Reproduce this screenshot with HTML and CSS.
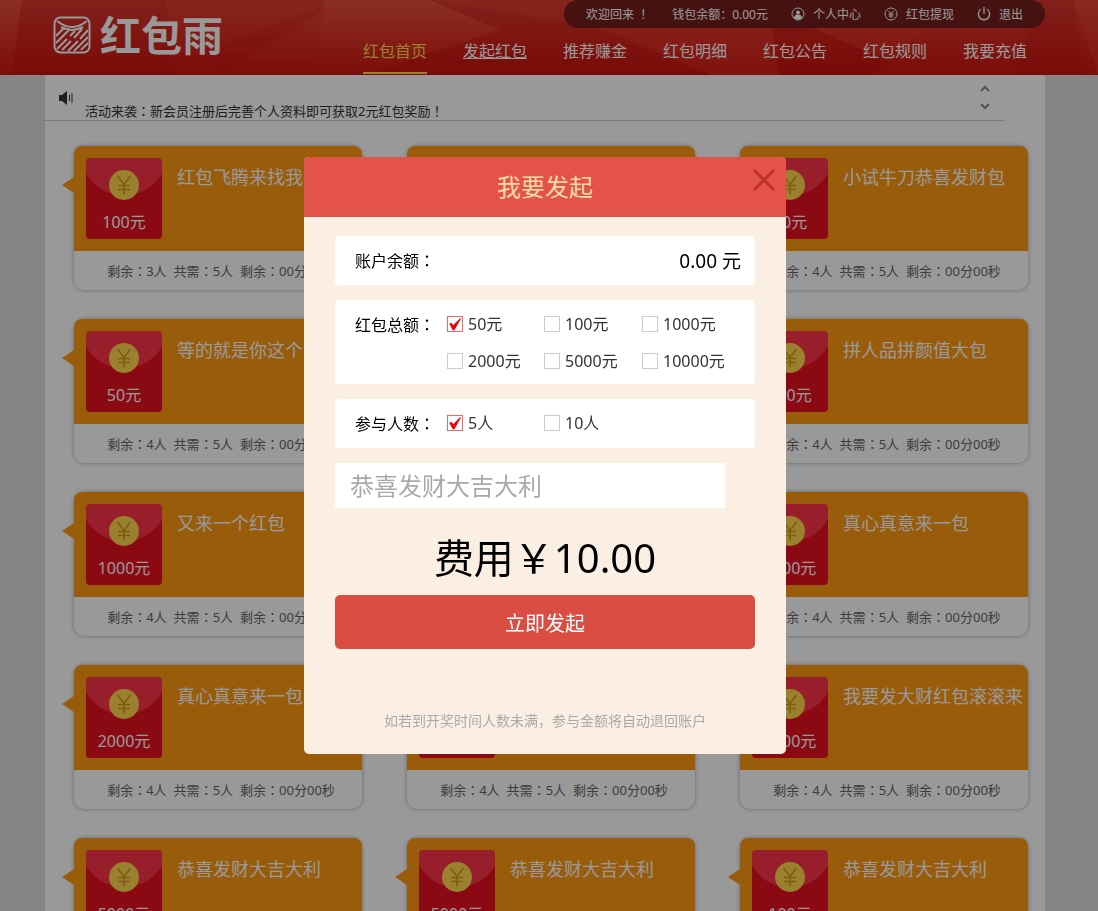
FILE: index.html
```html
<!DOCTYPE html>
<html lang="zh-CN">
<head>
<meta charset="utf-8">
<meta name="viewport" content="width=device-width, initial-scale=1">
<title>红包雨</title>
<link rel="stylesheet" href="styles.css">
</head>
<body>
<svg class="defs" aria-hidden="true">
  <symbol id="coin" viewBox="0 0 30 30">
    <circle cx="15" cy="15" r="15" fill="#ffd84f"/>
    <path d="M8.500 6 15 14.500 21.500 6M15 14.500V24.500M9 15.500H21M9 19.500H21" fill="none" stroke="#d09a22" stroke-width="1.600"/>
  </symbol>
</svg>

<header class="header">
  <svg class="header-art" viewBox="0 0 1098 75" preserveAspectRatio="none" aria-hidden="true">
    <defs>
      <linearGradient id="base" x1="0" y1="0" x2="0" y2="1">
        <stop offset="0" stop-color="#df3f33"/>
        <stop offset="1" stop-color="#d01410"/>
      </linearGradient>
      <linearGradient id="light" x1="0" y1="0" x2="0" y2="1">
        <stop offset="0" stop-color="#ff7a5c" stop-opacity=".25"/>
        <stop offset="1" stop-color="#ff5a3c" stop-opacity=".02"/>
      </linearGradient>
    </defs>
    <rect width="1098" height="75" fill="url(#base)"/>
    <path d="M0 0H22L12 75H0Z" fill="url(#light)"/>
    <path d="M22 0H166L176 75H12Z" fill="#b80808" opacity=".15"/>
    <path d="M325 0 318 15 215 75H365L500 30 430 0Z" fill="url(#light)"/>
    <path d="M325 6 205 50 225 75H312Z" fill="#b80808" opacity=".1"/>
    <path d="M430 0 500 30 365 75H710L600 28Z" fill="#b80808" opacity=".15"/>
    <path d="M598 28H775L780 75H712Z" fill="#ff5a35" opacity=".15"/>
    <path d="M772 28H812L890 62 875 75H778Z" fill="#c00606" opacity=".3"/>
    <path d="M812 28H925L888 60Z" fill="#ff5a35" opacity=".12"/>
    <path d="M1040 0H1074L1084 75H1015Z" fill="#b80808" opacity=".15"/>
    <path d="M1074 0H1098V75Z" fill="#ff6a45" opacity=".15"/>
  </svg>
  <div class="wrap header-inner">
    <a class="logo" href="#">
      <svg width="38" height="38" viewBox="0 0 38 38" fill="none" stroke="currentColor" stroke-width="2" aria-hidden="true">
        <rect x="1.500" y="1.500" width="35" height="35" rx="6"/>
        <path d="M4 5Q19 17 34 5M8 11Q19 17 30 11M3 20 11 12M3 27 16 14M4 33 14 23M17 20 22 15M9 34 18 25M21 22 29 13M15 35 25 25M27 23 35 14M21 35 35 21M28 34 35 27"/>
      </svg>
      <span>红包雨</span>
    </a>
    <div class="header-side">
      <div class="account">
        <span class="welcome">欢迎回来 <i class="mark" lang="zh-Hant">！</i></span>
        <span class="balance">钱包余额：0.00元</span>
        <a href="#"><svg width="14" height="14" viewBox="0 0 14 14" aria-hidden="true"><circle cx="7" cy="7" r="6" fill="none" stroke="currentColor"/><circle cx="7" cy="5.500" r="2" fill="currentColor"/><path d="M3 11Q3 7.500 7 7.500T11 11Q7 14 3 11Z" fill="currentColor"/></svg>个人中心</a>
        <a href="#"><svg width="14" height="14" viewBox="0 0 14 14" fill="none" stroke="currentColor" aria-hidden="true"><circle cx="7" cy="7" r="6"/><path d="M4.500 4 7 6.500 9.500 4M7 6.500V11M4.500 7H9.500M4.500 9H9.500"/></svg>红包提现</a>
        <a href="#"><svg width="14" height="14" viewBox="0 0 14 14" fill="none" stroke="currentColor" aria-hidden="true"><path d="M4 2.200A5.700 5.700 0 1 0 10 2.200M7 0V7" stroke-width="1.300"/></svg>退出</a>
      </div>
      <nav class="nav">
        <a class="active" href="#">红包首页</a>
        <a class="hover" href="#">发起红包</a>
        <a href="#">推荐赚金</a>
        <a href="#">红包明细</a>
        <a href="#">红包公告</a>
        <a href="#">红包规则</a>
        <a href="#">我要充值</a>
      </nav>
    </div>
  </div>
</header>

<div class="content">
<main class="wrap page">
  <div class="notice">
    <svg class="speaker" width="14" height="14" viewBox="0 0 14 14" aria-hidden="true"><path d="M0 4H3L8 0V14L3 10H0Z" fill="currentColor"/><path d="M10.500 4V10M13 2V12" stroke="currentColor" fill="none"/></svg>
    <p>活动来袭<i class="mark" lang="zh-Hant">：</i>新会员注册后完善个人资料即可获取2元红包奖励<i class="mark" lang="zh-Hant">！</i></p>
    <div class="arrows">
      <button type="button" aria-label="上一条"><svg width="10" height="7" viewBox="0 0 10 7"><path d="M1 6 5 2 9 6"/></svg></button>
      <button type="button" aria-label="下一条"><svg width="10" height="7" viewBox="0 0 10 7"><path d="M1 1 5 5 9 1"/></svg></button>
    </div>
  </div>
  <section class="cards" id="cards"></section>
</main>
</div>

<div class="overlay">
  <form class="modal" role="dialog" aria-labelledby="modal-title">
    <div class="modal-head">
      <h2 id="modal-title">我要发起</h2>
      <button class="close" type="button" aria-label="关闭"><svg width="22" height="22" viewBox="0 0 22 22"><path d="M1 1 21 21M21 1 1 21"/></svg></button>
    </div>
    <div class="modal-body">
      <div class="field">
        <span class="label">账户余额<i class="mark" lang="zh-Hant">：</i></span>
        <output class="amount">0.00 元</output>
      </div>
      <div class="field" role="group" aria-labelledby="total-label">
        <span class="label" id="total-label">红包总额<i class="mark" lang="zh-Hant">：</i></span>
        <div class="options">
          <label><input type="checkbox" checked>50元</label>
          <label><input type="checkbox">100元</label>
          <label><input type="checkbox">1000元</label>
          <label><input type="checkbox">2000元</label>
          <label><input type="checkbox">5000元</label>
          <label><input type="checkbox">10000元</label>
        </div>
      </div>
      <div class="field" role="group" aria-labelledby="people-label">
        <span class="label" id="people-label">参与人数<i class="mark" lang="zh-Hant">：</i></span>
        <div class="options">
          <label><input type="checkbox" checked>5人</label>
          <label><input type="checkbox">10人</label>
        </div>
      </div>
      <input class="wish" type="text" placeholder="恭喜发财大吉大利" aria-label="祝福语">
      <p class="fee">费用￥10.00</p>
      <button class="submit" type="submit">立即发起</button>
      <p class="tip">如若到开奖时间人数未满，参与金额将自动退回账户</p>
    </div>
  </form>
</div>
<script src="cards.js"></script>
</body>
</html>
```
FILE: cards.js
```js
const packets = [
  ['红包飞腾来找我', 100, 3], ['恭喜发财大吉大利', 50, 4], ['小试牛刀恭喜发财包', 10, 4],
  ['等的就是你这个包', 50, 4], ['恭喜发财大吉大利', 100, 4], ['拼人品拼颜值大包', 100, 4],
  ['又来一个红包', 1000, 4], ['恭喜发财大吉大利', 1000, 4], ['真心真意来一包', 1000, 4],
  ['真心真意来一包', 2000, 4], ['恭喜发财大吉大利', 2000, 4], ['我要发大财红包滚滚来', 2000, 4],
  ['恭喜发财大吉大利', 5000, 4], ['恭喜发财大吉大利', 5000, 4], ['恭喜发财大吉大利', 100, 4]
];

const colon = '<i class="mark" lang="zh-Hant">：</i>';

document.getElementById('cards').innerHTML = packets.map(([title, sum, left]) => `
  <article class="card">
    <div class="card-top">
      <div class="packet">
        <svg width="30" height="30" aria-hidden="true"><use href="#coin"/></svg>
        <span>${sum}元</span>
      </div>
      <h3>${title}</h3>
    </div>
    <div class="card-info">
      <span>剩余${colon}${left}人</span>
      <span>共需${colon}5人</span>
      <span>剩余${colon}00分00秒</span>
    </div>
  </article>`).join('');
```
FILE: styles.css
```css
* {
  box-sizing: border-box;
}

body {
  margin: 0;
  height: 100vh;
  overflow: hidden;
  background: #dedede;
  color: #333;
  font-family: "Noto Sans", "Noto Sans CJK SC", sans-serif;
  font-size: 13px;
}

h2, h3, p {
  margin: 0;
  font-weight: 400;
}

a {
  color: inherit;
  text-decoration: none;
}

button {
  padding: 0;
  border: 0;
  background: none;
  font: inherit;
  cursor: pointer;
}

.defs {
  display: none;
}

.mark {
  font-family: "Noto Sans CJK TC", sans-serif;
  font-style: normal;
  line-height: 1;
}

.wrap {
  width: calc(100% - 90px);
  max-width: 1000px;
  margin: 0 auto;
}

/* Header */
.header {
  position: relative;
  height: 75px;
  padding-right: 8px;
  color: #fff;
}

.header-art {
  position: absolute;
  inset: 0;
  width: 100%;
  height: 100%;
}

.header-inner {
  position: relative;
  display: flex;
  justify-content: space-between;
  height: 100%;
}

.logo {
  display: flex;
  align-items: center;
  gap: 9px;
  height: 70px;
  padding-left: 8px;
  font-size: 41px;
  font-weight: 700;
  line-height: 1;
}

.header-side {
  display: flex;
  flex-direction: column;
  align-items: flex-end;
}

.account {
  display: flex;
  align-items: center;
  height: 28px;
  padding: 0 22px;
  border-radius: 14px;
  background: rgba(90, 25, 25, .8);
  font-size: 12px;
  gap: 23px;
}

.account a {
  display: flex;
  align-items: center;
  gap: 8px;
}

.nav {
  display: flex;
  gap: 36px;
  padding-right: 18px;
  font-size: 16px;
}

.nav a {
  height: 46px;
  line-height: 46px;
}

.nav .active {
  border-bottom: 2px solid #ffd84f;
  color: #ffd84f;
}

.nav .hover {
  text-decoration: underline;
}

/* Page */
.content {
  padding-right: 8px;
}

.page {
  background: #fff;
}

.notice {
  display: flex;
  align-items: flex-start;
  height: 46px;
  margin-right: 40px;
  padding: 10px 14px 0;
  border-bottom: 1px solid #ccc;
}

.speaker {
  margin-top: 6px;
}

.notice p {
  flex: 1;
  padding: 17px 0 0 12px;
  line-height: 18px;
}

.arrows {
  display: flex;
  flex-direction: column;
  gap: 11px;
  padding-right: 1px;
}

.arrows button {
  display: flex;
}

.arrows path {
  fill: none;
  stroke: #888;
  stroke-width: 2;
}

.cards {
  display: grid;
  grid-template-columns: repeat(3, 1fr);
  gap: 29px 45px;
  padding: 25px 17px 29px 29px;
}

.card {
  position: relative;
  border-radius: 10px;
  box-shadow: 0 0 4px rgba(0, 0, 0, .35);
}

.card::before {
  content: "";
  position: absolute;
  top: 31px;
  left: -12px;
  border: 8px solid transparent;
  border-right: 12px solid #ff9912;
  border-left: 0;
}

.card-top {
  display: flex;
  gap: 15px;
  height: 105px;
  padding: 12px 0 0 12px;
  border-radius: 8px 8px 0 0;
  background: #ff9912;
  color: #fff;
}

.card-top h3 {
  padding-top: 6px;
  font-size: 18px;
  line-height: 27px;
  white-space: nowrap;
}

.packet {
  display: flex;
  flex-direction: column;
  align-items: center;
  gap: 10px;
  flex: none;
  width: 76px;
  height: 81px;
  padding-top: 12px;
  border-radius: 4px;
  background: radial-gradient(circle at 50% -6px, #ff3348 43px, #e61020 44px);
  font-size: 16px;
  line-height: 24px;
}

.card-info {
  display: flex;
  justify-content: center;
  align-items: center;
  gap: 7px;
  height: 39px;
  padding-left: 6px;
  color: #666;
}

/* Dialog */
.overlay {
  position: fixed;
  inset: 0;
  display: flex;
  align-items: center;
  justify-content: center;
  padding-right: 8px;
  background: rgba(0, 0, 0, .4);
}

.modal {
  width: 482px;
  overflow: hidden;
  border-radius: 5px;
  background: #faefe2;
  color: #000;
}

.modal-head {
  position: relative;
  background: #e35349;
  color: #ffdba8;
  text-align: center;
}

.modal-head h2 {
  font-size: 24px;
  line-height: 60px;
}

.close {
  position: absolute;
  top: 12px;
  right: 11px;
  display: flex;
}

.close path {
  stroke: #bb3129;
  stroke-width: 3;
}

.modal-body {
  display: flex;
  flex-direction: column;
  gap: 15px;
  padding: 19px 31px 22px;
}

.field {
  display: flex;
  justify-content: space-between;
  padding: 12px 14px 11px 20px;
  border-radius: 4px;
  background: #fff;
  font-size: 16px;
  line-height: 26px;
}

.amount {
  font-size: 19px;
}

.options {
  display: grid;
  grid-template-columns: 97px 98px 1fr;
  gap: 13px 0;
  flex: 1;
  align-content: start;
  padding-left: 12px;
  color: #333;
  line-height: 24px;
}

.options label {
  display: flex;
  align-items: center;
  gap: 5px;
  height: 24px;
  white-space: nowrap;
}

.options input {
  appearance: none;
  flex: none;
  width: 16px;
  height: 16px;
  margin: 0;
  border: 1px solid #ccc;
  background: #fff;
}

.options input:checked {
  border-color: #e66;
}

.options input:checked::before {
  content: "";
  display: block;
  width: 14px;
  height: 14px;
  background: #f00008;
  clip-path: polygon(8% 46%, 24% 42%, 38% 58%, 88% 8%, 92% 12%, 46% 94%, 34% 94%);
}

.wish {
  width: 390px;
  max-width: 100%;
  height: 45px;
  padding: 0 15px;
  border: 0;
  background: #fff;
  font: inherit;
  font-size: 24px;
}

.wish::placeholder {
  color: #a9a9a9;
  opacity: 1;
}

.fee {
  padding-top: 12px;
  font-size: 40px;
  line-height: 45px;
  text-align: center;
}

.submit {
  height: 54px;
  border-radius: 5px;
  background: #d94d43;
  color: #fff;
  font-size: 20px;
}

.tip {
  padding-top: 45px;
  color: #aaa;
  font-size: 14px;
  line-height: 23px;
  text-align: center;
}
```
